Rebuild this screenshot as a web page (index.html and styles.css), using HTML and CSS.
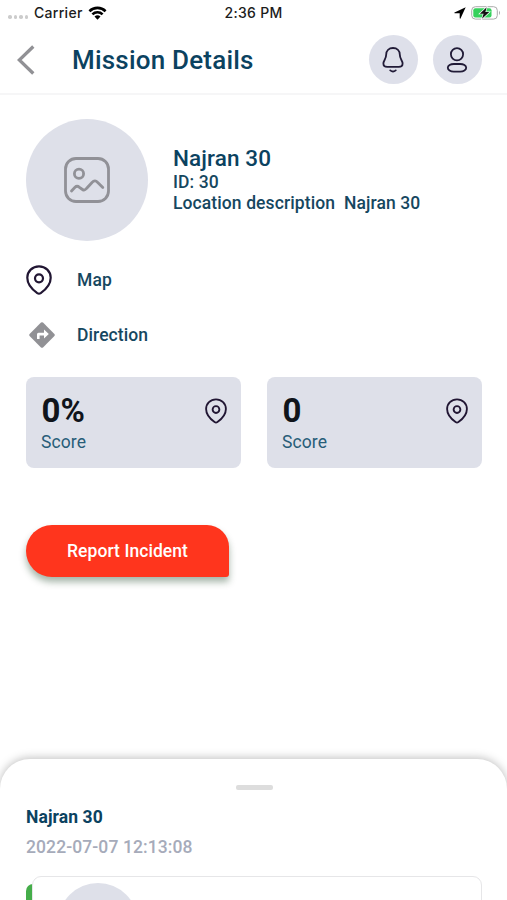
FILE: index.html
```html
<!DOCTYPE html>
<html lang="en">
<head>
<meta charset="utf-8">
<title>Mission Details</title>
<link rel="stylesheet" href="styles.css">
</head>
<body>
<svg width="0" height="0" class="defs">
  <symbol id="pin" viewBox="0 0 26 30">
    <path d="M13 1.300C6.400 1.300 1.300 6.300 1.300 12.700C1.300 19.500 6.500 24.700 11.300 28.100Q13 29.200 14.700 28.100C19.500 24.700 24.700 19.500 24.700 12.700C24.700 6.300 19.600 1.300 13 1.300Z"/>
    <circle cx="13" cy="13.300" r="4"/>
  </symbol>
</svg>
<div class="screen">
  <div class="status">
    <div class="carrier">
      <span class="dots"><i></i><i></i><i></i><i></i></span>
      <span>Carrier</span>
      <svg class="wifi" viewBox="0 0 18 14"><path d="M0 4.300A12.700 12.700 0 0 1 18 4.300L16.200 6.200A10.200 10.200 0 0 0 1.800 6.200ZM3 7.500A8.500 8.500 0 0 1 15 7.500L13.200 9.300A6 6 0 0 0 4.800 9.300ZM6 10.600A4.300 4.300 0 0 1 12 10.600L9 13.700Z"/></svg>
    </div>
    <span class="time">2:36 PM</span>
    <div class="power">
      <svg class="arrow" viewBox="0 0 12 12"><path d="M11.700.3L.5 5.500Q0 6 .7 6.200H5.700V11.200Q6 12 6.500 11.400Z"/></svg>
      <svg class="battery" viewBox="0 0 30 14"><rect x=".7" y=".7" width="25.600" height="12.400" rx="3.700" fill="#fff" stroke="#aaa"/><rect x="2.300" y="2.300" width="18.200" height="9.200" rx="2" fill="#36d15c"/><path d="M28 4.800Q30 6.900 28 9Z" fill="#aaa"/><path d="M15.700 1.200L8.800 7.700H12.600L11 12.800L18.300 6.100H14.400Z" fill="#111" stroke="#fff" stroke-width="1.300" paint-order="stroke"/></svg>
    </div>
  </div>
  <header class="header">
    <svg class="back" viewBox="0 0 18 30"><path d="M16.300 1.500L2.300 15L16.300 28.500"/></svg>
    <h1>Mission Details</h1>
    <div class="round"><svg class="bell" viewBox="0 0 22 26"><path d="M11 1C6.900 1 4.200 3.800 4.200 7.600C4.200 12.300 1.400 13.300 1.400 16.500C1.400 18.900 2.700 19.900 5.200 19.900H16.800C19.300 19.900 20.600 18.900 20.600 16.500C20.600 13.300 17.800 12.300 17.800 7.600C17.800 3.800 15.100 1 11 1ZM8.300 23.400Q11 25.600 13.700 23.400"/></svg></div>
    <div class="round"><svg class="user" viewBox="0 0 22 26"><circle cx="11" cy="7.200" r="6.100"/><rect x="1.800" y="17" width="18.400" height="7.600" rx="6" ry="3.800"/></svg></div>
  </header>
  <main>
    <section class="profile">
      <div class="avatar"><svg viewBox="0 0 46 46"><rect x="1.500" y="1.500" width="43" height="43" rx="10.500"/><circle cx="15" cy="16.700" r="4.600"/><path d="M7.500 34L11 30.300Q13 28.300 15.500 30.300L18.500 32.500Q20.500 34 22.500 31.500L28 25.500Q31 22.500 33.500 25.200L38.800 30.500"/></svg></div>
      <div class="info">
        <h2>Najran 30</h2>
        <p class="id">ID: 30</p>
        <p class="desc">Location description  Najran 30</p>
      </div>
    </section>
    <nav class="links">
      <div class="link"><svg class="pin large"><use href="#pin"/></svg><span>Map</span></div>
      <div class="link"><svg class="direction" viewBox="0 0 26 26"><path fill="#919195" d="M25.400 12L14 .6Q13 -.2 12 .6L.6 12Q-.2 13 .6 14L12 25.400Q13 26.200 14 25.400L25.400 14Q26.200 13 25.400 12Z"/><path fill="#fff" d="M8 17V12.300Q8 10.800 9.500 10.800H15V7.500L19.800 12L15 16.500V13.400H10.600V17Z"/></svg><span>Direction</span></div>
    </nav>
    <section class="scores">
      <div class="card"><div><strong>0%</strong><span>Score</span></div><svg class="pin small"><use href="#pin"/></svg></div>
      <div class="card"><div><strong>0</strong><span>Score</span></div><svg class="pin small"><use href="#pin"/></svg></div>
    </section>
    <button class="report">Report Incident</button>
  </main>
  <section class="sheet">
    <div class="handle"></div>
    <h3>Najran 30</h3>
    <time>2022-07-07 12:13:08</time>
    <div class="entry"><div class="accent"></div><div class="entry-card"><div class="entry-avatar"></div></div></div>
  </section>
</div>
</body>
</html>
```
FILE: styles.css
```css
* { box-sizing: border-box; margin: 0; }
body { background: #fff; color: #16475f; font-family: Roboto, "Liberation Sans", sans-serif; }
svg { display: block; fill: none; flex: none; }
.defs { position: absolute; }
.screen { width: 507px; height: 900px; overflow: hidden; display: flex; flex-direction: column; background: #fff; }

.status { height: 26px; flex: none; display: grid; grid-template-columns: 1fr auto 1fr; align-items: center; padding: 0 6px 0 8px; font: 500 14px/26px Inter, sans-serif; letter-spacing: .3px; color: #1c1c1c; }
.carrier { display: flex; align-items: center; }
.time { margin-left: -2px; }
.dots { display: flex; gap: 2px; width: 26px; padding-top: 8px; }
.dots i { width: 3.500px; height: 3.500px; border-radius: 50%; background: #ccc; }
.wifi { width: 19px; height: 14px; margin-left: 5px; fill: #000; }
.power { display: flex; justify-content: flex-end; align-items: center; gap: 5px; }
.arrow { width: 12px; height: 12px; fill: #000; }
.battery { width: 30px; height: 14px; }

.header { height: 69px; flex: none; display: flex; align-items: center; padding: 0 25px 0 17px; border-bottom: 2px solid #f6f6f7; }
.back { width: 18px; height: 30px; stroke: #919195; stroke-width: 3.300; }
h1 { flex: 1; margin-left: 37px; font-size: 26px; line-height: 30px; font-weight: 500; letter-spacing: .2px; color: #0b4260; white-space: nowrap; }
.round { width: 49px; height: 49px; border-radius: 50%; background: #dee0ea; display: grid; place-items: center; }
.round + .round { margin-left: 15px; }
.round svg { width: 22px; height: 26px; margin-right: 2px; stroke: #211b37; stroke-width: 1.800; stroke-linecap: round; }

main { flex: none; height: 664px; padding: 24px 25px 0 26px; }
.profile { display: flex; height: 122px; }
.avatar { width: 122px; height: 122px; border-radius: 50%; background: #dee0e9; display: grid; place-items: center; }
.avatar svg { width: 46px; height: 46px; stroke: #919197; stroke-width: 2.800; stroke-linecap: round; }
.info { margin-left: 25px; padding-top: 26px; font-size: 17.500px; font-weight: 500; line-height: 20.500px; letter-spacing: .1px; }
.desc { white-space: pre; }
h2 { font-size: 22.500px; line-height: 27px; font-weight: 500; letter-spacing: .1px; color: #0b4260; }
.links { padding-top: 11px; }
.link { display: grid; grid-template-columns: 51px 1fr; align-items: center; height: 56px; font-size: 17.500px; line-height: 20px; font-weight: 500; letter-spacing: .08px; }
.link + .link { height: 54px; }
.pin { stroke: #211633; stroke-width: 2.200; }
.large { width: 26px; height: 30px; }
.small { width: 22px; height: 26px; margin-top: 6px; }
.direction { width: 26px; height: 26px; margin-left: 3px; }
.scores { display: grid; grid-template-columns: 1fr 1fr; gap: 26px; padding-top: 15px; }
.card { height: 91px; border-radius: 8px; background: #dee0e9; display: flex; justify-content: space-between; padding: 15px 14px 0 15px; }
.card strong { display: block; font-size: 33px; line-height: 38px; font-weight: 700; margin-left: .5px; color: #10141b; }
.card span { display: block; font-size: 17.500px; line-height: 24px; letter-spacing: .1px; color: #285d78; }
.report { display: block; width: 203px; height: 52px; margin-top: 57px; padding: 0; border: 0; border-radius: 26px 22px 3px 26px; background: #ff351d; color: #fff; font: 500 17.500px/52px Roboto, sans-serif; letter-spacing: .06px; box-shadow: 0 5px 7px rgba(20,60,30,.38); }

.sheet { flex: none; height: 160px; background: #fff; border-radius: 30px 30px 0 0; box-shadow: 0 -1px 10px rgba(0,0,0,.26); padding: 26px 25px 0 26px; }
.handle { width: 37px; height: 5px; border-radius: 2px; background: #ddd; margin: 0 auto; }
h3 { margin-top: 17px; font-size: 17.500px; line-height: 20px; font-weight: 700; letter-spacing: .1px; color: #0b4260; }
time { display: block; margin-top: 10px; font-size: 17.500px; line-height: 20px; font-weight: 500; letter-spacing: .1px; color: #a6abba; }
.entry { display: flex; margin-top: 19px; }
.accent { width: 7px; margin-top: 8px; height: 60px; border-radius: 7px 0 0 0; background: #45ad4a; }
.entry-card { flex: 1; height: 80px; border: 1px solid #e6e6e8; border-radius: 9px; margin-left: -1px; background: #fff; padding: 6px 0 0 25px; }
.entry-avatar { width: 80px; height: 80px; border-radius: 50%; background: #dee0e9; }
```
